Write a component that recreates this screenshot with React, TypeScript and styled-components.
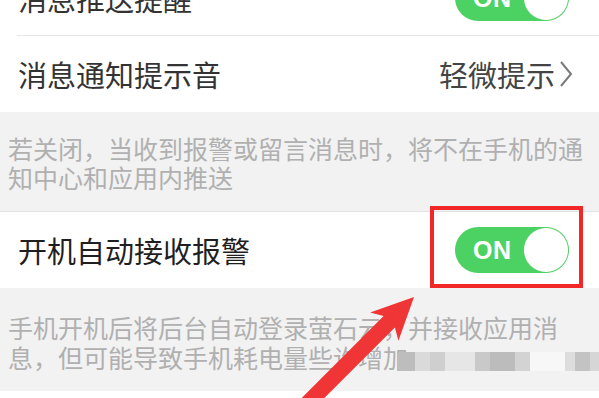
import React, { FC } from 'react'
import styled, { createGlobalStyle } from 'styled-components'

const GlobalStyle = createGlobalStyle`
  html, body {
    margin: 0;
    padding: 0;
    background: #ffffff;
  }
  body {
    font-family: "Noto Sans CJK SC", "Liberation Sans", sans-serif;
  }
`

const Screen = styled.div`
  position: relative;
  width: 599px;
  height: 398px;
  overflow: hidden;
  background: #ffffff;
`

const Page = styled.div`
  margin-top: -40px;
  display: flex;
  flex-direction: column;
`

const Cell = styled.div<{ $divider?: boolean; $topLine?: boolean }>`
  height: 76px;
  display: flex;
  align-items: center;
  justify-content: space-between;
  padding: 0 30px 0 18px;
  background: #ffffff;
  position: relative;
  border-top: ${p => (p.$topLine ? '1px solid #e2e2e2' : 'none')};

  &::after {
    content: '';
    display: ${p => (p.$divider ? 'block' : 'none')};
    position: absolute;
    left: 17px;
    right: 0;
    bottom: 0;
    height: 1px;
    background: #e6e6e6;
  }
`

const Title = styled.span<{ $dark?: boolean }>`
  font-size: 29px;
  line-height: 1;
  color: ${p => (p.$dark ? '#1f1f1f' : '#333333')};
`

const Value = styled.span`
  display: flex;
  align-items: center;
  gap: 4px;
  margin-right: -4px;
  font-size: 29px;
  line-height: 1;
  color: #444444;
`

const Note = styled.div<{ $tall?: boolean }>`
  position: relative;
  background: #f2f2f2;
  padding: ${p => (p.$tall ? '24px 8px 19px' : '22px 8px 19px')};
  font-size: 25px;
  line-height: ${p => (p.$tall ? '30px' : '29px')};
  color: #b0b0b0;
  white-space: nowrap;
`

const Mosaic = styled.span`
  display: inline-flex;
  vertical-align: middle;
  margin-left: -11px;
  height: 19px;
`

const Tile = styled.span<{ $w: number; $c: string }>`
  display: block;
  width: ${p => p.$w}px;
  height: 100%;
  background: ${p => p.$c};
`

const Track = styled.div`
  position: relative;
  width: 114px;
  height: 46px;
  border-radius: 23px;
  background: #4cd263;
  display: flex;
  align-items: center;
  padding: 0 1px 0 18px;
  box-sizing: border-box;
  justify-content: space-between;
`

const OnLabel = styled.span`
  font-family: "Liberation Sans", "DejaVu Sans", sans-serif;
  font-weight: 700;
  font-size: 25px;
  color: #ffffff;
  letter-spacing: 0.5px;
`

const Knob = styled.span`
  width: 44px;
  height: 44px;
  border-radius: 50%;
  background: #ffffff;
  box-shadow: 0 0 0 0.5px #5fd06f;
`

const Highlight = styled.div`
  position: relative;

  &::after {
    content: '';
    position: absolute;
    left: -25px;
    right: -14px;
    top: -21px;
    bottom: -15px;
    border: 4px solid #f22828;
    pointer-events: none;
  }
`

const ArrowLayer = styled.svg`
  position: absolute;
  left: 0;
  top: 0;
  width: 599px;
  height: 398px;
  pointer-events: none;
`

const Toggle: FC = () => (
  <Track>
    <OnLabel>ON</OnLabel>
    <Knob />
  </Track>
)

const Chevron: FC = () => (
  <svg width="14" height="26" viewBox="0 0 14 26">
    <polyline points="2,1 12,13 2,25" fill="none" stroke="#7a7a7a" strokeWidth="2" />
  </svg>
)

const blur = [
  { w: 18, c: '#bdbdbd' },
  { w: 15, c: '#dadada' },
  { w: 15, c: '#cfcfcf' },
  { w: 30, c: '#e6e6e6' },
  { w: 15, c: '#c9c9c9' },
  { w: 25, c: '#bcbcbc' },
  { w: 15, c: '#d3d3d3' },
  { w: 35, c: '#f7f7f7' },
  { w: 10, c: '#dddddd' },
  { w: 15, c: '#c3c3c3' },
  { w: 12, c: '#d6d6d6' },
]

export default function App() {
  return (
    <Screen>
      <GlobalStyle />
      <Page>
        <Cell $divider>
          <Title>消息推送提醒</Title>
          <Toggle />
        </Cell>
        <Cell>
          <Title>消息通知提示音</Title>
          <Value>
            轻微提示
            <Chevron />
          </Value>
        </Cell>
        <Note>
          若关闭，当收到报警或留言消息时，将不在手机的通
          <br />
          知中心和应用内推送
        </Note>
        <Cell $topLine>
          <Title $dark>开机自动接收报警</Title>
          <Highlight>
            <Toggle />
          </Highlight>
        </Cell>
        <Note $tall>
          手机开机后将后台自动登录萤石云，并接收应用消
          <br />
          息，但可能导致手机耗电量些许增加
          <Mosaic>
            {blur.map((b, i) => (
              <Tile key={i} $w={b.w} $c={b.c} />
            ))}
          </Mosaic>
        </Note>
        <Cell />
      </Page>
      <ArrowLayer viewBox="0 0 599 398">
        <g transform="translate(414 297) rotate(-45)">
          <polygon
            points="0,0 -42,-20 -35,-8 -180,-8 -180,8 -35,8 -42,20"
            fill="#ef3535"
          />
        </g>
      </ArrowLayer>
    </Screen>
  )
}
